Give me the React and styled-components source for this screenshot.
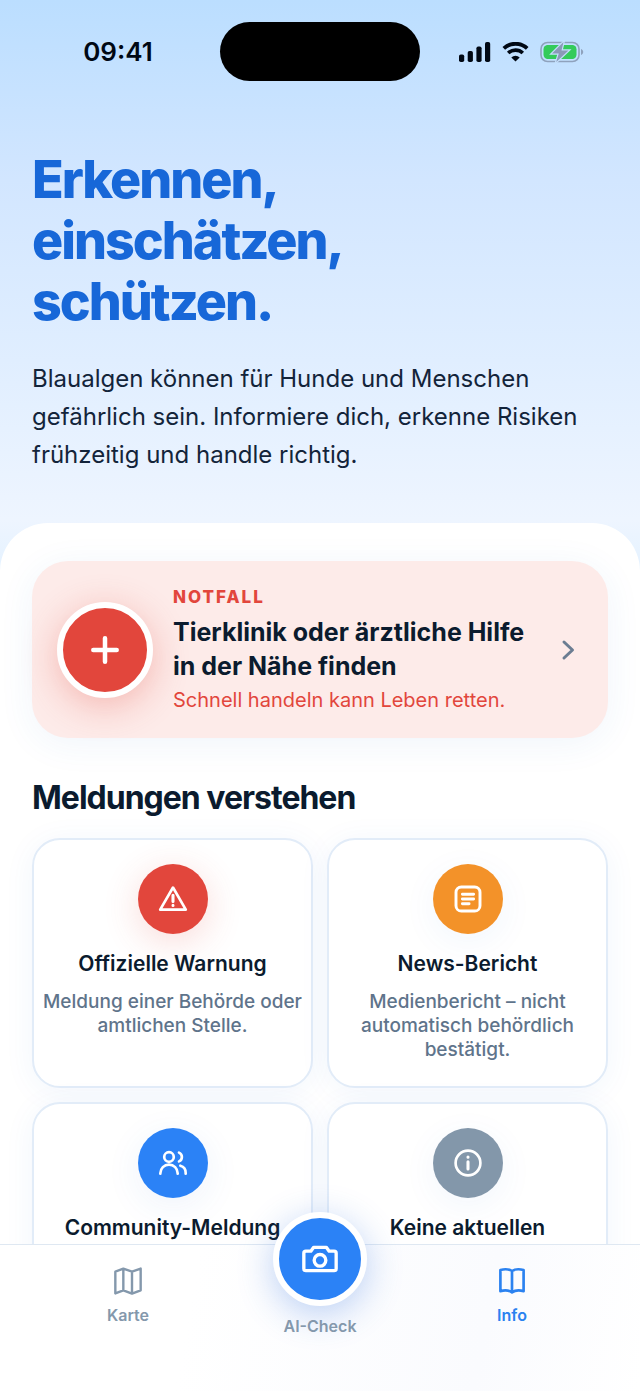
import styled, { createGlobalStyle } from "styled-components";

const GlobalStyle = createGlobalStyle`
  * {
    box-sizing: border-box;
  }

  body {
    margin: 0;
    font-family: Inter, "Liberation Sans", sans-serif;
    color: #0b1b2e;
  }

  h1, h2, h3, p {
    margin: 0;
  }

  button {
    font-family: inherit;
    color: inherit;
    cursor: pointer;
  }
`;

const Screen = styled.div`
  height: 100vh;
  display: flex;
  flex-direction: column;
  overflow: hidden;
  background: #ffffff;
`;

const Content = styled.main`
  flex: 1;
  min-height: 0;
  overflow-y: auto;
  scrollbar-width: none;
  background: linear-gradient(#bbdeff 0, #d2e6ff 180px, #e0eeff 360px, #eef5ff 520px, #e2f1ff 580px);
`;

const StatusBar = styled.div`
  display: grid;
  grid-template-columns: 1fr 200px 1fr;
  align-items: center;
  padding-top: 22px;
`;

const Time = styled.span`
  padding-left: 16px;
  text-align: center;
  font-size: 26px;
  font-weight: 600;
  color: #000814;
`;

const Island = styled.div`
  height: 59px;
  border-radius: 30px;
  background: #000000;
`;

const StatusIcons = styled.div`
  display: flex;
  align-items: center;
  gap: 11px;
  padding-left: 39px;
`;

const Hero = styled.header`
  padding: 68px 32px 49px;
`;

const HeroTitle = styled.h1`
  font-size: 52px;
  line-height: 61px;
  font-weight: 800;
  letter-spacing: -2px;
  color: #1767d8;
`;

const HeroText = styled.p`
  margin-top: 28px;
  font-size: 24px;
  line-height: 38px;
  color: #13243a;
`;

const Sheet = styled.div`
  padding: 38px 32px 0;
  border-radius: 48px 48px 0 0;
  background: #ffffff;
`;

const Emergency = styled.button`
  width: 100%;
  display: flex;
  align-items: center;
  gap: 20px;
  padding: 25px 32px 25px 25px;
  border: 0;
  border-radius: 36px;
  background: #fdebe9;
  box-shadow: 0 6px 36px rgba(40, 110, 200, 0.07);
  text-align: left;
`;

const RoundIcon = styled.span`
  flex: none;
  display: flex;
  align-items: center;
  justify-content: center;
  width: ${(props) => props.$size}px;
  height: ${(props) => props.$size}px;
  border: ${(props) => (props.$ring ? "6px solid #ffffff" : "0")};
  border-radius: 50%;
  background: ${(props) => props.$color};
  box-shadow: 0 8px 36px ${(props) => props.$glow};
  color: #ffffff;
`;

const EmergencyBody = styled.span`
  flex: 1;
  display: flex;
  flex-direction: column;
`;

const EmergencyTag = styled.span`
  font-size: 17px;
  line-height: 22px;
  font-weight: 800;
  letter-spacing: 2px;
  color: #e2463c;
`;

const EmergencyTitle = styled.span`
  margin: 7px 0 4px;
  font-size: 25px;
  line-height: 34px;
  font-weight: 700;
`;

const EmergencyText = styled.span`
  font-size: 20px;
  line-height: 26px;
  color: #e2463c;
`;

const SectionTitle = styled.h2`
  margin: 40px 0 20px;
  font-size: 32px;
  line-height: 40px;
  font-weight: 700;
  letter-spacing: -1px;
`;

const CardGrid = styled.div`
  display: grid;
  grid-template-columns: 1fr 1fr;
  gap: 14px;
`;

const Card = styled.article`
  min-height: 250px;
  display: flex;
  flex-direction: column;
  align-items: center;
  padding: 24px 4px;
  border: 2px solid #e2ecf8;
  border-radius: 28px;
  background: #ffffff;
  box-shadow: 0 4px 32px rgba(40, 100, 200, 0.06);
  text-align: center;
`;

const CardTitle = styled.h3`
  margin: 16px 0 12px;
  font-size: 21px;
  line-height: 28px;
  font-weight: 600;
  white-space: nowrap;
`;

const CardText = styled.p`
  max-width: 264px;
  font-size: 19px;
  line-height: 24px;
  font-weight: 500;
  color: #5f748b;
`;

const TabBar = styled.nav`
  position: relative;
  display: grid;
  grid-template-columns: repeat(3, 1fr);
  height: 147px;
  padding: 0 32px;
  border-top: 1px solid #dfe8f2;
  background: linear-gradient(100deg, #ffffff 30%, #fafbfe 75%, #ffffff);
`;

const Tab = styled.button`
  display: flex;
  flex-direction: column;
  align-items: center;
  justify-content: flex-start;
  gap: 8px;
  padding: 20px 0 0;
  border: 0;
  background: none;
  font-size: 16px;
  line-height: 20px;
  font-weight: 600;
  color: ${(props) => (props.$active ? "#2b82f0" : "#8498ac")};
`;

// The camera button sticks out above the bar
const CheckTab = styled(Tab)`
  gap: 10px;
  margin-top: -33px;
  padding: 0;
`;

const Icon = ({ size, width = 2, children }) => (
  <svg
    width={size}
    height={size}
    viewBox="0 0 24 24"
    fill="none"
    stroke="currentColor"
    strokeWidth={width}
    strokeLinecap="round"
    strokeLinejoin="round"
    aria-hidden="true"
  >
    {children}
  </svg>
);

const SignalIcon = () => (
  <svg width="32" height="20" viewBox="0 0 32 20" fill="#000814" aria-hidden="true">
    <rect x="0" y="12.5" width="5.2" height="7.500" rx="1.8" />
    <rect x="8.7" y="9" width="5.2" height="11" rx="1.8" />
    <rect x="17.4" y="4.5" width="5.2" height="15.5" rx="1.8" />
    <rect x="26" y="0" width="5.2" height="20" rx="1.8" />
  </svg>
);

const WifiIcon = () => (
  <svg width="27" height="20" viewBox="0 0 27 20" fill="none" aria-hidden="true">
    <path d="M1.8 6.4a17 17 0 0 1 23.4 0" stroke="#000814" strokeWidth="3.8" />
    <path d="M6.2 11a10.6 10.6 0 0 1 14.6 0" stroke="#000814" strokeWidth="3.6" />
    <path d="M13.5 19.6 9.3 15.4a6 6 0 0 1 8.4 0z" fill="#000814" />
  </svg>
);

const BatteryIcon = () => (
  <svg width="44" height="22" viewBox="0 0 44 22" fill="none" aria-hidden="true">
    <rect x="1" y="1.5" width="38" height="19" rx="6.5" stroke="#8fa2bd" strokeWidth="1.6" />
    <rect x="3.5" y="4" width="33" height="14" rx="4.2" fill="#34cb5a" />
    <path d="M41 8v6c1.4-.5 2.2-1.7 2.2-3S42.4 8.5 41 8z" fill="#8fa2bd" />
    <path
      d="M23.5 1 12 12.600h6.800L16.200 21 28.500 9.400h-7z"
      fill="#8b9ab8"
      stroke="#c4e0fc"
      strokeWidth="2.4"
      paintOrder="stroke"
    />
  </svg>
);

const PlusIcon = () => (
  <Icon size={36} width={3}>
    <path d="M12 4.2v15.6M4.2 12h15.6" />
  </Icon>
);

const ChevronIcon = () => (
  <svg width="15" height="22" viewBox="0 0 15 22" fill="none" stroke="#6b7d92" strokeWidth="3" strokeLinecap="round" strokeLinejoin="round" aria-hidden="true">
    <path d="m3 3 8.500 8L3 19" />
  </svg>
);

const WarningIcon = () => (
  <Icon size={32}>
    <path d="M12 3.400 21.600 20H2.400z" />
    <path d="M12 9.200v4.600M12 16.800v.1" strokeWidth="2.300" />
  </Icon>
);

const NewsIcon = () => (
  <Icon size={32} width={2.200}>
    <rect x="3" y="3" width="18" height="18" rx="4" />
    <path d="M7.800 8.500h8.400M7.800 12h8.400M7.800 15.500h5" />
  </Icon>
);

const PeopleIcon = () => (
  <Icon size={32}>
    <circle cx="9" cy="7.5" r="3.6" />
    <path d="M2.500 20v-.3a6.500 6.500 0 0 1 13 0v.3" />
    <path d="M16.500 4.200a3.600 3.600 0 0 1 0 6.600M17.500 14a5.500 5.500 0 0 1 4 5.400v.6" />
  </Icon>
);

const InfoIcon = () => (
  <Icon size={32}>
    <circle cx="12" cy="12" r="9.3" />
    <path d="M12 11v5.500M12 7.500v.1" strokeWidth="2.300" />
  </Icon>
);

const MapIcon = () => (
  <Icon size={32} width={1.8}>
    <path d="m2.500 5 6-2.300L15 5l6.500-2.300v16.300L15 21.500 8.500 19l-6 2.300zM8.500 2.700V19M15 5v16.500" />
  </Icon>
);

const BookIcon = () => (
  <Icon size={32}>
    <path d="M12 4.500C9.800 3 6.500 2.900 3.300 3.700v15.900c3.200-.8 6.500-.6 8.700.9 2.200-1.500 5.500-1.700 8.700-.9V3.700C17.500 2.900 14.200 3 12 4.500zM12 4.500v16" />
  </Icon>
);

const CameraIcon = () => (
  <Icon size={40} width={2}>
    <path d="M3.500 7.300h3l1.700-2.300h7.600l1.700 2.300h3c.7 0 1.200.5 1.200 1.200v9.300c0 .7-.5 1.200-1.200 1.200h-17c-.7 0-1.200-.5-1.200-1.200V8.500c0-.7.5-1.200 1.200-1.200z" />
    <circle cx="12" cy="12.800" r="3.500" />
  </Icon>
);

const cards = [
  {
    title: "Offizielle Warnung",
    text: "Meldung einer Behörde oder amtlichen Stelle.",
    color: "#e2463c",
    glow: "rgba(226, 70, 60, 0.2)",
    icon: <WarningIcon />,
  },
  {
    title: "News-Bericht",
    text: "Medienbericht – nicht automatisch behördlich bestätigt.",
    color: "#f39229",
    glow: "rgba(40, 100, 200, 0.06)",
    icon: <NewsIcon />,
  },
  {
    title: "Community-Meldung",
    color: "#2b82f6",
    glow: "rgba(40, 100, 200, 0.08)",
    icon: <PeopleIcon />,
  },
  {
    title: "Keine aktuellen",
    color: "#8397aa",
    glow: "rgba(40, 100, 200, 0.06)",
    icon: <InfoIcon />,
  },
];

const App = () => {
  return (
    <Screen>
      <GlobalStyle />
      <Content>
        <StatusBar>
          <Time>09:41</Time>
          <Island />
          <StatusIcons>
            <SignalIcon />
            <WifiIcon />
            <BatteryIcon />
          </StatusIcons>
        </StatusBar>
        <Hero>
          <HeroTitle>
            Erkennen,
            <br />
            einschätzen,
            <br />
            schützen.
          </HeroTitle>
          <HeroText>
            Blaualgen können für Hunde und Menschen gefährlich sein. Informiere
            dich, erkenne Risiken frühzeitig und handle richtig.
          </HeroText>
        </Hero>
        <Sheet>
          <Emergency type="button">
            <RoundIcon $size={96} $ring $color="#e2463c" $glow="rgba(226, 70, 60, 0.32)">
              <PlusIcon />
            </RoundIcon>
            <EmergencyBody>
              <EmergencyTag>NOTFALL</EmergencyTag>
              <EmergencyTitle>
                Tierklinik oder ärztliche Hilfe
                <br />
                in der Nähe finden
              </EmergencyTitle>
              <EmergencyText>Schnell handeln kann Leben retten.</EmergencyText>
            </EmergencyBody>
            <ChevronIcon />
          </Emergency>
          <SectionTitle>Meldungen verstehen</SectionTitle>
          <CardGrid>
            {cards.map((card) => (
              <Card key={card.title}>
                <RoundIcon $size={70} $color={card.color} $glow={card.glow}>
                  {card.icon}
                </RoundIcon>
                <CardTitle>{card.title}</CardTitle>
                {card.text && <CardText>{card.text}</CardText>}
              </Card>
            ))}
          </CardGrid>
        </Sheet>
      </Content>
      <TabBar>
        <Tab type="button">
          <MapIcon />
          Karte
        </Tab>
        <CheckTab type="button">
          <RoundIcon $size={94} $ring $color="#2b82f6" $glow="rgba(43, 110, 220, 0.32)">
            <CameraIcon />
          </RoundIcon>
          AI-Check
        </CheckTab>
        <Tab type="button" $active>
          <BookIcon />
          Info
        </Tab>
      </TabBar>
    </Screen>
  );
};

export default App;
